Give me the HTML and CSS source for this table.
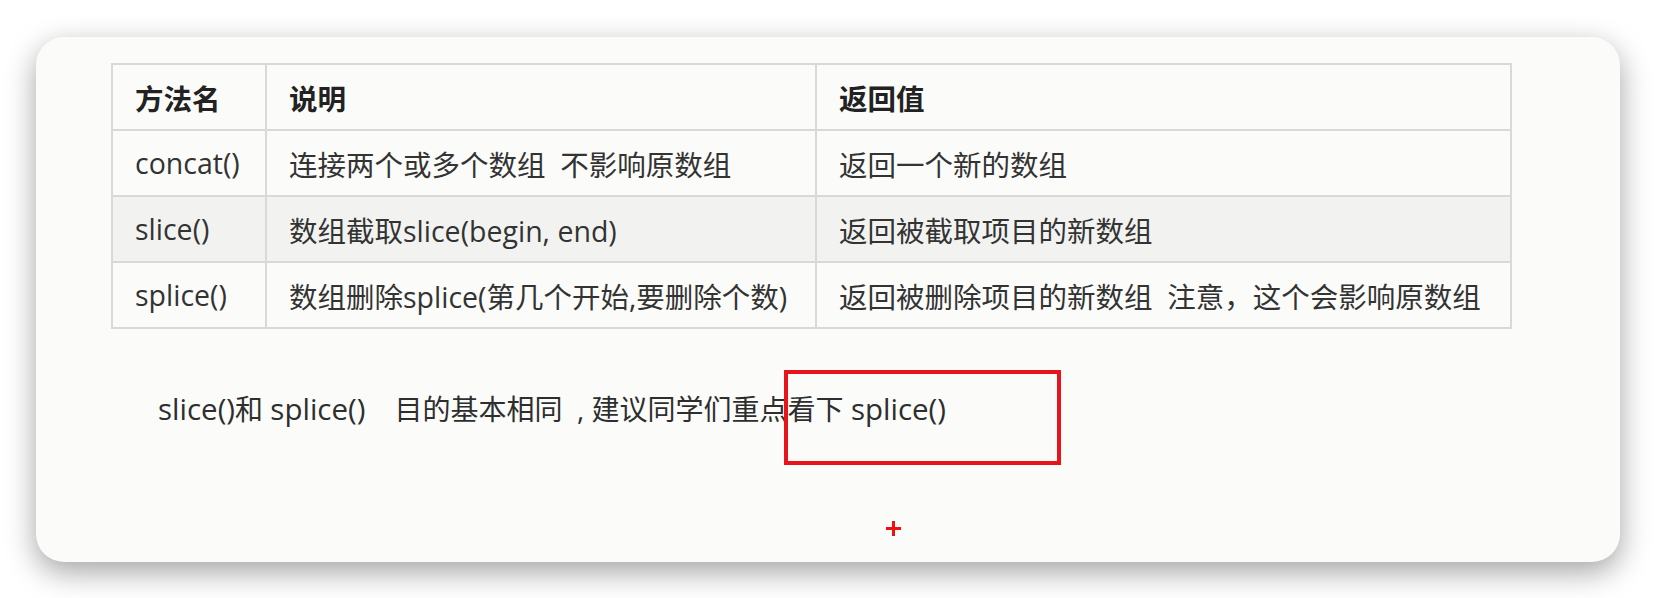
FILE: index.html
```html
<!DOCTYPE html>
<html lang="zh-CN">
<head>
<meta charset="UTF-8">
<title>数组方法</title>
<link rel="stylesheet" href="styles.css">
</head>
<body>
<div class="card">
    <table class="methods">
        <tr>
            <th class="c1">方法名</th>
            <th class="c2">说明</th>
            <th class="c3">返回值</th>
        </tr>
        <tr>
            <td>concat()</td>
            <td>连接两个或多个数组&nbsp; 不影响原数组</td>
            <td>返回一个新的数组</td>
        </tr>
        <tr class="alt">
            <td>slice()</td>
            <td>数组截取slice(begin, end)</td>
            <td>返回被截取项目的新数组</td>
        </tr>
        <tr>
            <td>splice()</td>
            <td>数组删除splice(第几个开始,要删除个数)</td>
            <td>返回被删除项目的新数组&nbsp; 注意，这个会影响原数组</td>
        </tr>
    </table>
    <p class="note"><span class="fn">slice()</span>和 <span class="fn">splice()</span>&nbsp;&nbsp;&nbsp; 目的基本相同&nbsp; , 建议同学们重点看下 <span class="fn">splice()</span></p>
    <!-- 视频里的红框标注 -->
    <div class="mark"></div>
    <div class="cross"></div>
</div>
</body>
</html>
```

FILE: styles.css
```css
*{
    margin:0;
    padding:0;
    box-sizing:border-box;
}
html,body{
    height:100%;
}
body{
    min-height:598px;
    padding:37px 0 0 36px;
    background:#fff;
    font-family:"Open Sans","Noto Sans CJK SC",sans-serif;
    color:#333;
}
.card{
    position:relative;
    width:1584px;
    height:525px;
    padding:26px 0 0 75px;
    background:#fbfcfa;
    border-radius:28px;
    box-shadow:0 10px 30px rgba(0,0,0,0.36);
}
.methods{
    width:1401px;
    border-collapse:collapse;
    font-size:28.5px;
}
.methods th,
.methods td{
    height:66px;
    padding:0 22px;
    border:2px solid #d9dad8;
    text-align:left;
    white-space:nowrap;
}
.methods th{
    font-weight:bold;
    color:#222;
}
.methods .c1{ width:154px; }
.methods .c2{ width:550px; }
.methods .alt td{
    background:#f2f3f1;
}
.note{
    margin:60px 0 0 47px;
    line-height:40px;
    font-size:28px;
    color:#2e2e2e;
    white-space:nowrap;
}
.note .fn{
    font-size:29.5px;
}
.mark{
    position:absolute;
    left:748px;
    top:333px;
    width:277px;
    height:95px;
    border:4px solid #e8141b;
}
.cross{
    position:absolute;
    left:850px;
    top:484px;
    width:15px;
    height:15px;
}
.cross:before,
.cross:after{
    content:"";
    position:absolute;
    background:#f01010;
}
.cross:before{
    left:0;
    top:6px;
    width:15px;
    height:3px;
}
.cross:after{
    left:6px;
    top:0;
    width:3px;
    height:15px;
}
```
